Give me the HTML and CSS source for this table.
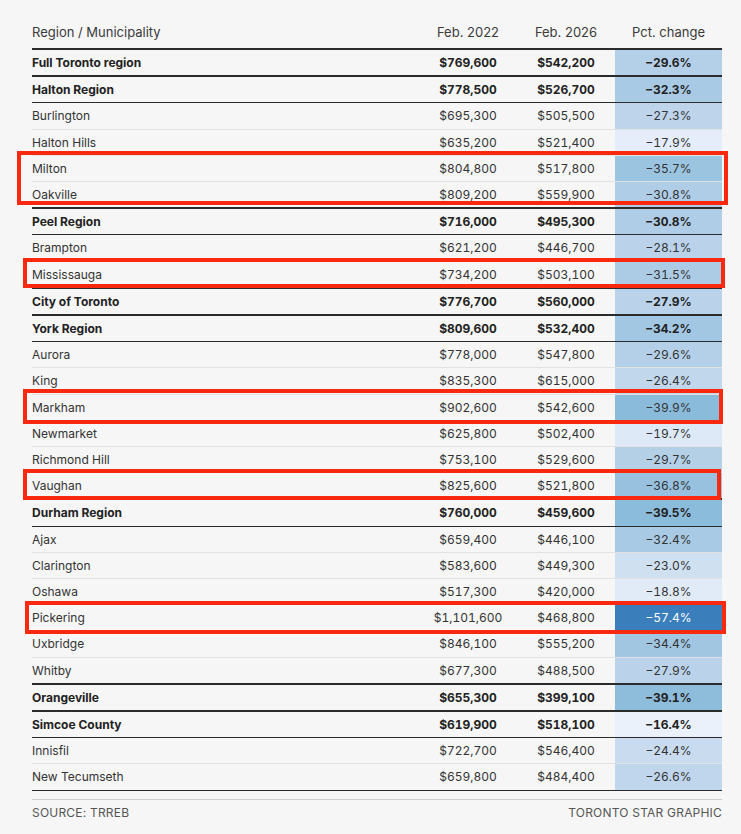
FILE: index.html
```html
<!DOCTYPE html>
<html lang="en">
  <head>
    <meta charset="UTF-8" />
    <meta name="viewport" content="width=device-width, initial-scale=1.0" />
    <title>GTA house prices: Feb. 2022 vs Feb. 2026</title>
    <link rel="stylesheet" href="styles.css">
    <script>
      window.addEventListener("DOMContentLoaded", () => {

        // table body
        const tbody = document.querySelector(".tbl tbody");

        // [name, feb 2022, feb 2026, pct, region row?]
        const data = [
          ["Full Toronto region", "$769,600", "$542,200", -29.6, 1],
          ["Halton Region", "$778,500", "$526,700", -32.3, 1],
          ["Burlington", "$695,300", "$505,500", -27.3],
          ["Halton Hills", "$635,200", "$521,400", -17.9],
          ["Milton", "$804,800", "$517,800", -35.7],
          ["Oakville", "$809,200", "$559,900", -30.8],
          ["Peel Region", "$716,000", "$495,300", -30.8, 1],
          ["Brampton", "$621,200", "$446,700", -28.1],
          ["Mississauga", "$734,200", "$503,100", -31.5],
          ["City of Toronto", "$776,700", "$560,000", -27.9, 1],
          ["York Region", "$809,600", "$532,400", -34.2, 1],
          ["Aurora", "$778,000", "$547,800", -29.6],
          ["King", "$835,300", "$615,000", -26.4],
          ["Markham", "$902,600", "$542,600", -39.9],
          ["Newmarket", "$625,800", "$502,400", -19.7],
          ["Richmond Hill", "$753,100", "$529,600", -29.7],
          ["Vaughan", "$825,600", "$521,800", -36.8],
          ["Durham Region", "$760,000", "$459,600", -39.5, 1],
          ["Ajax", "$659,400", "$446,100", -32.4],
          ["Clarington", "$583,600", "$449,300", -23.0],
          ["Oshawa", "$517,300", "$420,000", -18.8],
          ["Pickering", "$1,101,600", "$468,800", -57.4],
          ["Uxbridge", "$846,100", "$555,200", -34.4],
          ["Whitby", "$677,300", "$488,500", -27.9],
          ["Orangeville", "$655,300", "$399,100", -39.1, 1],
          ["Simcoe County", "$619,900", "$518,100", -16.4, 1],
          ["Innisfil", "$722,700", "$546,400", -24.4],
          ["New Tecumseth", "$659,800", "$484,400", -26.6]
        ];

        // colour stops for the pct cell (value -> rgb)
        const stops = [
          [-16, [236, 242, 251]],
          [-20, [220, 232, 246]],
          [-27, [190, 213, 235]],
          [-30, [178, 207, 231]],
          [-35, [158, 197, 225]],
          [-40, [138, 187, 219]],
          [-57.4, [58, 126, 188]]
        ];

        /****************************
          retColor: pct -> rgb()
        ****************************/
        function retColor(v){
          for(let i = 0; i < stops.length - 1; i++){
            const [a, ca] = stops[i];
            const [b, cb] = stops[i + 1];
            if(v <= a && v >= b){
              const t = (a - v) / (a - b);
              const c = ca.map((x, k) => Math.round(x + (cb[k] - x) * t));
              return `rgb(${c.join(",")})`;
            }
          }
          return v > -16 ? "rgb(236,242,251)" : "rgb(58,126,188)";
        } //////// retColor ////////

        let hcode = "";
        data.forEach(([name, a, b, pct, reg]) => {
          const txt = "\u2212" + Math.abs(pct).toFixed(1) + "%";
          const dark = pct < -50 ? " dark" : "";
          hcode += `
            <tr class="${reg ? "reg" : "mun"}">
              <td class="name">${name}</td>
              <td class="num">${a}</td>
              <td class="num">${b}</td>
              <td class="pct${dark}" style="background-color:${retColor(pct)}">${txt}</td>
            </tr>`;
        }); //////// forEach ////////

        tbody.innerHTML = hcode;
      }); //////// load ////////
    </script>
  </head>
  <body>
    <div class="wrap">
      <table class="tbl">
        <thead>
          <tr>
            <th class="name">Region / Municipality</th>
            <th class="num">Feb. 2022</th>
            <th class="num">Feb. 2026</th>
            <th class="pct">Pct. change</th>
          </tr>
        </thead>
        <tbody></tbody>
      </table>

      <!-- footer -->
      <div class="foot">
        <span>SOURCE: TRREB</span>
        <span>TORONTO STAR GRAPHIC</span>
      </div>

      <!-- red highlight boxes -->
      <div class="mark m-milton"></div>
      <div class="mark m-miss"></div>
      <div class="mark m-markham"></div>
      <div class="mark m-vaughan"></div>
      <div class="mark m-pickering"></div>
    </div>
  </body>
</html>
```

FILE: styles.css
```css
html,
body {
  margin: 0;
  padding: 0;
}
body {
  background-color: #f6f6f6;
  font-family: Inter, "Liberation Sans", sans-serif;
  color: #333;
}

/* page box */
.wrap {
  position: relative;
  width: 690px;
  padding: 20px 19px 0 32px;
}

/* table */
.tbl {
  width: 100%;
  border-collapse: collapse;
  table-layout: fixed;
  font-size: 12px;
}
.tbl th {
  font-size: 13px;
  font-weight: 400;
  line-height: 16px;
  padding: 4px 0 8px;
  border-bottom: 2px solid #2b2b2b;
  color: #3a3a3a;
}
.tbl td {
  padding: 4px 0;
  line-height: 17.2px;
}
.tbl .name {
  text-align: left;
}
/* price columns are centred */
.tbl .num {
  width: 98px;
  text-align: center;
}
.tbl td.num,
.tbl td.pct {
  font-variant-numeric: tabular-nums;
}
.tbl .pct {
  width: 107px;
  text-align: center;
}
.tbl td.pct.dark {
  color: #fff;
}

/* municipality rows */
.mun td {
  border-bottom: 1px solid #e2e2e2;
}
/* region rows */
.reg td {
  font-weight: 700;
  color: #222;
  border-top: 2px solid #2b2b2b;
  border-bottom: 1px solid #2b2b2b;
}
.tbl tbody tr:last-child td {
  border-bottom: 1px solid #2b2b2b;
}

/* footer */
.foot {
  display: flex;
  justify-content: space-between;
  margin-top: 8px;
  padding-top: 6px;
  border-top: 1px solid #cfcfcf;
  font-size: 12px;
  line-height: 14px;
  color: #555;
  letter-spacing: 0.2px;
}

/* red annotation boxes */
.mark {
  position: absolute;
  border: 4px solid #f8290e;
  box-sizing: border-box;
}
.m-milton {
  left: 17px;
  top: 151px;
  width: 711px;
  height: 54px;
}
.m-miss {
  left: 23px;
  top: 258px;
  width: 702px;
  height: 30px;
}
.m-markham {
  left: 23px;
  top: 389px;
  width: 700px;
  height: 35px;
}
.m-vaughan {
  left: 23px;
  top: 469px;
  width: 698px;
  height: 31px;
}
.m-pickering {
  left: 25px;
  top: 601px;
  width: 701px;
  height: 33px;
}
```
